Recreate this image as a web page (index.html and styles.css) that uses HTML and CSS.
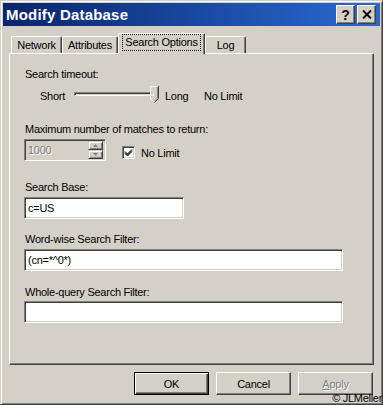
FILE: index.html
```html
<!DOCTYPE html>
<html>
<head>
<meta charset="utf-8">
<link rel="stylesheet" href="styles.css">
</head>
<body>
<div class="window">
  <div class="titlebar">
    <span class="title">Modify Database</span>
    <div class="caption-btns">
      <span class="cbtn help">?</span>
      <span class="cbtn close">
        <svg width="10" height="9" viewBox="0 0 10 9"><path d="M1 0.5 L9 8.5 M9 0.5 L1 8.5" stroke="#000" stroke-width="2" fill="none"/></svg>
      </span>
    </div>
  </div>
  <div class="client">
    <div class="tabs">
      <div class="tab t-net">Network</div>
      <div class="tab t-attr">Attributes</div>
      <div class="tab sel t-search"><span class="focus">Search Options</span></div>
      <div class="tab t-log">Log</div>
    </div>
    <div class="panel">
      <div class="label first">Search timeout:</div>
      <div class="slider-row">
        <span class="s-short">Short</span>
        <div class="slider">
          <div class="track"></div>
          <svg class="thumb" width="9" height="17" viewBox="0 0 9 17">
            <path d="M0.5 12.5 L0.5 0.5 L7.5 0.5" stroke="#fff" fill="#d4d0c8"/>
            <path d="M8.5 0 L8.5 12.5 L4.5 16.5" stroke="#404040" fill="none"/>
            <path d="M7.5 1 L7.5 12 L4.5 15" stroke="#808080" fill="none"/>
            <path d="M0.5 12.5 L4 16" stroke="#fff" fill="none"/>
          </svg>
        </div>
        <span class="s-long">Long</span>
        <span class="s-nolimit">No Limit</span>
      </div>
      <div class="label l-max">Maximum number of matches to return:</div>
      <div class="spin-row">
        <div class="spin">
          <span class="spin-text">1000</span>
          <div class="spin-btns">
            <span class="sbtn"><svg width="5" height="3" viewBox="0 0 5 3"><path d="M2.5 0 L5 3 L0 3 Z" fill="#808080"/></svg></span>
            <span class="sbtn"><svg width="5" height="3" viewBox="0 0 5 3"><path d="M0 0 L5 0 L2.5 3 Z" fill="#808080"/></svg></span>
          </div>
        </div>
        <span class="checkbox">
          <svg width="9" height="9" viewBox="0 0 9 9"><path d="M1 3.5 L3.5 6 L8 1.5 M1 4.5 L3.5 7 L8 2.5 M1 5.5 L3.5 8 L8 3.5" stroke="#000" stroke-width="1" fill="none"/></svg>
        </span>
        <span class="cb-label">No Limit</span>
      </div>
      <div class="label l-base">Search Base:</div>
      <div class="edit short">c=US</div>
      <div class="label l-word">Word-wise Search Filter:</div>
      <div class="edit long">(cn=*^0*)</div>
      <div class="label l-whole">Whole-query Search Filter:</div>
      <div class="edit long whole"></div>
    </div>
    <div class="buttons">
      <span class="btn default">OK</span>
      <span class="btn">Cancel</span>
      <span class="btn disabled"><u>A</u>pply</span>
    </div>
  </div>
  <div class="copyright">© JLMeller</div>
</div>
</body>
</html>
```
FILE: styles.css
```css
* { box-sizing: border-box; }
html, body { margin: 0; padding: 0; }
body {
  width: 383px;
  height: 405px;
  overflow: hidden;
  background: #d4d0c8;
  font-family: "Liberation Sans", Arial, sans-serif;
  font-size: 11px;
  letter-spacing: -0.25px;
  color: #000;
}
.window {
  position: relative;
  width: 383px;
  height: 405px;
  background: #d4d0c8;
  border: 1px solid;
  border-color: #d4d0c8 #404040 #404040 #d4d0c8;
  box-shadow: inset 1px 1px #fff, inset -1px -1px #808080;
  padding: 2px;
  display: flex;
  flex-direction: column;
}
.titlebar {
  height: 23px;
  background: linear-gradient(to right, #0a246a, #2460c4 85%, #2a68cc);
  display: flex;
  align-items: center;
  padding-left: 3px;
  padding-right: 4px;
}
.title {
  flex: 1;
  color: #fff;
  font-weight: bold;
  font-size: 15px;
  letter-spacing: 0.2px;
  line-height: 18px;
}
.caption-btns { display: flex; gap: 2px; }
.cbtn {
  width: 19px;
  height: 19px;
  background: #d4d0c8;
  border: 1px solid;
  border-color: #fff #404040 #404040 #fff;
  box-shadow: inset -1px -1px #808080;
  display: flex;
  align-items: center;
  justify-content: center;
  font-weight: bold;
  font-size: 14px;
  line-height: 14px;
  letter-spacing: 0;
}
.client {
  flex: 1;
  display: flex;
  flex-direction: column;
  padding: 0 6px;
}
.tabs {
  margin-top: 7px;
  height: 20px;
  display: flex;
  align-items: flex-end;
  padding-left: 2px;
}
.tab {
  height: 17px;
  border-top: 1px solid #fff;
  border-left: 1px solid #fff;
  border-right: 1px solid #404040;
  box-shadow: inset -1px 0 #808080;
  border-radius: 2px 2px 0 0;
  display: flex;
  align-items: center;
  justify-content: center;
  line-height: 13px;
  padding-top: 1px;
}
.t-net { width: 51px; }
.t-attr { width: 56px; }
.t-search { width: 87px; }
.t-log { width: 41px; }
.tab.sel {
  height: 21px;
  margin-bottom: -1px;
  background: #d4d0c8;
  position: relative;
  z-index: 1;
  padding-top: 0;
  padding-bottom: 3px;
}
.focus {
  outline: 1px dotted #000;
  outline-offset: 1px;
  padding: 0 1px;
}
.panel {
  height: 312px;
  border: 1px solid;
  border-color: #fff #404040 #404040 #fff;
  box-shadow: inset -1px -1px #808080;
  padding: 14px 14px 0 14px;
  display: flex;
  flex-direction: column;
  align-items: flex-start;
}
.label { line-height: 13px; padding-left: 1px; }
.slider-row {
  margin-top: 5px;
  height: 20px;
  display: flex;
  align-items: center;
  padding-left: 16px;
}
.s-short { width: 34px; }
.slider {
  position: relative;
  width: 85px;
  height: 20px;
}
.track {
  margin-top: 6px;
  width: 80px;
  height: 4px;
  border: 1px solid;
  border-color: #808080 #fff #fff #808080;
  box-shadow: inset 1px 1px #404040;
}
.thumb { position: absolute; left: 76px; top: 0; }
.s-long { margin-left: 6px; width: 39px; }
.l-max { margin-top: 17px; }
.spin-row {
  margin-top: 3px;
  display: flex;
  align-items: flex-end;
}
.spin {
  width: 82px;
  height: 22px;
  border: 1px solid;
  border-color: #808080 #fff #fff #808080;
  box-shadow: inset 1px 1px #404040, inset -1px -1px #d4d0c8;
  padding: 2px;
  display: flex;
  align-items: center;
}
.spin-text {
  flex: 1;
  color: #808080;
  text-shadow: 1px 1px #fff;
  padding-left: 1px;
}
.spin-btns {
  width: 15px;
  height: 18px;
  display: flex;
  flex-direction: column;
}
.sbtn {
  flex: 1;
  border: 1px solid;
  border-color: #d4d0c8 #404040 #404040 #d4d0c8;
  box-shadow: inset 1px 1px #fff, inset -1px -1px #808080;
  display: flex;
  align-items: center;
  justify-content: center;
}
.checkbox {
  margin-left: 16px;
  margin-bottom: 2px;
  width: 13px;
  height: 13px;
  background: #fff;
  border: 1px solid;
  border-color: #808080 #fff #fff #808080;
  box-shadow: inset 1px 1px #404040, inset -1px -1px #d4d0c8;
  display: flex;
  align-items: center;
  justify-content: center;
}
.cb-label { margin-left: 6px; margin-bottom: 1px; line-height: 13px; }
.l-base { margin-top: 20px; }
.l-word { margin-top: 14px; }
.l-whole { margin-top: 15px; }
.edit {
  margin-top: 3px;
  height: 22px;
  background: #fff;
  border: 1px solid;
  border-color: #808080 #fff #fff #808080;
  box-shadow: inset 1px 1px #404040, inset -1px -1px #d4d0c8;
  padding: 0 3px;
  display: flex;
  align-items: center;
}
.edit.whole { margin-top: 2px; }
.edit.short { width: 160px; }
.edit.long { width: 319px; }
.buttons {
  margin-top: 7px;
  display: flex;
  justify-content: flex-end;
  gap: 7px;
  padding-right: 1px;
}
.btn {
  width: 75px;
  height: 23px;
  border: 1px solid;
  border-color: #fff #404040 #404040 #fff;
  box-shadow: inset -1px -1px #808080;
  display: flex;
  align-items: center;
  justify-content: center;
}
.btn.default {
  border-color: #000;
  box-shadow: inset 1px 1px #fff, inset -1px -1px #404040, inset -2px -2px #808080;
}
.btn.disabled {
  color: #808080;
  text-shadow: 1px 1px #fff;
}
.copyright {
  position: absolute;
  right: 0;
  bottom: 0;
  font-size: 11px;
  line-height: 11px;
  letter-spacing: -0.3px;
}
```
